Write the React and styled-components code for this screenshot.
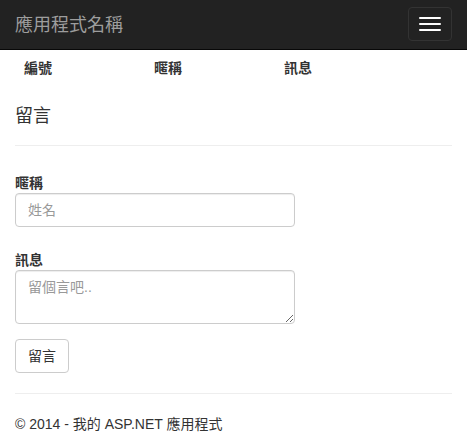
import React from 'react';
import styled, { createGlobalStyle } from 'styled-components';

const GlobalStyle = createGlobalStyle`
    body {
        margin: 0;
        background: #fff;
        color: #333;
        font-family: "Liberation Sans", "Noto Sans CJK TC", sans-serif;
        font-size: 14px;
        line-height: 20px;
    }
    * { box-sizing: border-box; }
`

const Navbar = styled.div`
    height: 50px;
    background: #222;
    border-bottom: 1px solid #080808;
    display: flex;
    align-items: center;
    justify-content: space-between;
    padding: 0 15px;
`

const Brand = styled.a`
    color: #9d9d9d;
    font-size: 18px;
    line-height: 20px;
    text-decoration: none;
`

const Toggle = styled.button`
    width: 44px;
    height: 34px;
    background: transparent;
    border: 1px solid #333;
    border-radius: 4px;
    padding: 9px 10px;
    display: flex;
    flex-direction: column;
    justify-content: center;
    gap: 4px;
    margin-top: -2px;
`

const IconBar = styled.span`
    display: block;
    width: 22px;
    height: 2px;
    background: #fff;
    border-radius: 1px;
`

const Table = styled.table`
    border-collapse: collapse;
    margin-left: 16px;
    margin-bottom: 20px;
`

const Th = styled.th`
    width: 130px;
    padding: 8px;
    text-align: left;
    font-weight: bold;
    line-height: 20px;
`

const Container = styled.div`
    padding: 0 15px;
`

const Title = styled.h4`
    margin: 0;
    font-size: 18px;
    font-weight: 400;
    line-height: 20px;
`

const Rule = styled.hr`
    border: 0;
    border-top: 1px solid #eee;
    margin: ${p => p.$top}px 0 ${p => p.$bottom}px;
`

const FormGroup = styled.div`
    margin-bottom: ${p => p.$mb}px;
`

const Label = styled.label`
    display: block;
    font-weight: bold;
    line-height: 20px;
    margin-bottom: 0;
`

const Input = styled.input`
    display: block;
    width: 280px;
    height: 34px;
    padding: 6px 12px;
    font: inherit;
    color: #555;
    border: 1px solid #ccc;
    border-radius: 4px;
    box-shadow: inset 0 1px 1px rgba(0, 0, 0, .075);
    &::placeholder { color: #999; }
`

const TextArea = styled.textarea`
    display: block;
    width: 280px;
    height: 54px;
    padding: 6px 12px;
    font: inherit;
    color: #555;
    border: 1px solid #ccc;
    border-radius: 4px;
    box-shadow: inset 0 1px 1px rgba(0, 0, 0, .075);
    &::placeholder { color: #999; }
`

const Button = styled.button`
    display: block;
    height: 34px;
    padding: 6px 12px;
    font: inherit;
    color: #333;
    background: #fff;
    border: 1px solid #ccc;
    border-radius: 4px;
`

const Footer = styled.p`
    margin: 0;
`

const App = () => {
    return (
        <div>
            <GlobalStyle />
            <Navbar>
                <Brand href="#">應用程式名稱</Brand>
                <Toggle>
                    <IconBar />
                    <IconBar />
                    <IconBar />
                </Toggle>
            </Navbar>
            <Table>
                <thead>
                    <tr>
                        <Th>編號</Th>
                        <Th>暱稱</Th>
                        <Th>訊息</Th>
                    </tr>
                </thead>
            </Table>
            <Container>
                <Title>留言</Title>
                <Rule $top={19} $bottom={27} />
                <FormGroup $mb={23}>
                    <Label>暱稱</Label>
                    <Input placeholder="姓名" />
                </FormGroup>
                <FormGroup $mb={15}>
                    <Label>訊息</Label>
                    <TextArea placeholder="留個言吧.." />
                </FormGroup>
                <Button>留言</Button>
                <Rule $top={20} $bottom={20} />
                <Footer>© 2014 - 我的 ASP.NET 應用程式</Footer>
            </Container>
        </div>
    )
}

export default App
